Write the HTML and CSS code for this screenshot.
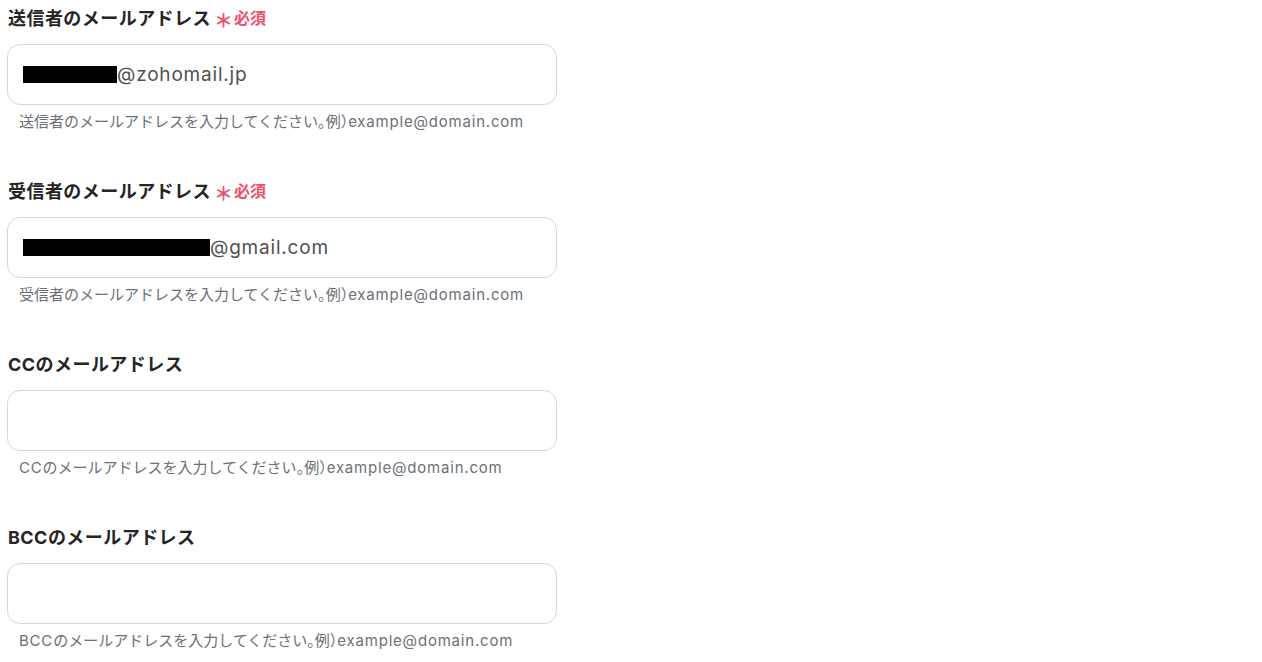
FILE: index.html
```html
<!DOCTYPE html>
<html lang="ja">
<head>
    <meta charset="UTF-8">
    <meta name="viewport" content="width=device-width, initial-scale=1.0">
    <title>メール設定</title>
    <link rel="stylesheet" href="styles.css">
</head>
<body>
<div class="form">
    <div class="field">
        <div class="label">送信者のメールアドレス<span class="req"><span class="star">＊</span>必須</span></div>
        <div class="input"><span class="mask" style="width: 94px"></span>@zohomail.jp</div>
        <div class="help">送信者のメールアドレスを入力してください<span class="p">。</span>例<span class="p">）</span><span class="en">example@domain.com</span></div>
    </div>
    <div class="field">
        <div class="label">受信者のメールアドレス<span class="req"><span class="star">＊</span>必須</span></div>
        <div class="input"><span class="mask" style="width: 187px"></span>@gmail.com</div>
        <div class="help">受信者のメールアドレスを入力してください<span class="p">。</span>例<span class="p">）</span><span class="en">example@domain.com</span></div>
    </div>
    <div class="field">
        <div class="label">CCのメールアドレス</div>
        <div class="input"></div>
        <div class="help"><span class="en">CC</span>のメールアドレスを入力してください<span class="p">。</span>例<span class="p">）</span><span class="en">example@domain.com</span></div>
    </div>
    <div class="field">
        <div class="label">BCCのメールアドレス</div>
        <div class="input"></div>
        <div class="help"><span class="en">BCC</span>のメールアドレスを入力してください<span class="p">。</span>例<span class="p">）</span><span class="en">example@domain.com</span></div>
    </div>
</div>
</body>
</html>
```

FILE: styles.css
```css
body {
    margin: 0;
    background: #fff;
    font-family: Inter, "Noto Sans CJK JP", sans-serif;
    color: #222;
}
.form {
    width: 550px;
    padding: 3px 0 0 7px;
}
.field {
    margin-bottom: 44px;
}
.field:last-child {
    margin-bottom: 0;
}
.label {
    display: flex;
    align-items: center;
    height: 28px;
    padding-left: 1px;
    font-size: 18px;
    font-weight: 700;
    letter-spacing: 0.45px;
    color: #252525;
}
.req {
    display: flex;
    align-items: center;
    margin-left: 3px;
    font-size: 16px;
    font-weight: 700;
    letter-spacing: 0;
    color: #f0506e;
}
.star {
    font-size: 19px;
    margin-top: 5px;
    margin-right: 1px;
}
.input {
    display: flex;
    align-items: center;
    height: 59px;
    margin-top: 13px;
    padding-left: 15px;
    border: 1px solid #d4d7dc;
    border-radius: 13px;
    font-size: 19px;
    letter-spacing: 0.8px;
    color: #505050;
}
.mask {
    display: inline-block;
    height: 17px;
    background: #000;
    margin-top: -1px;
}
.help {
    margin-top: 7px;
    padding-left: 12px;
    line-height: 20px;
    font-size: 15px;
    color: #6b6f76;
}
.help .en {
    letter-spacing: 0.8px;
}
.help .p {
    font-feature-settings: "halt";
}
```
